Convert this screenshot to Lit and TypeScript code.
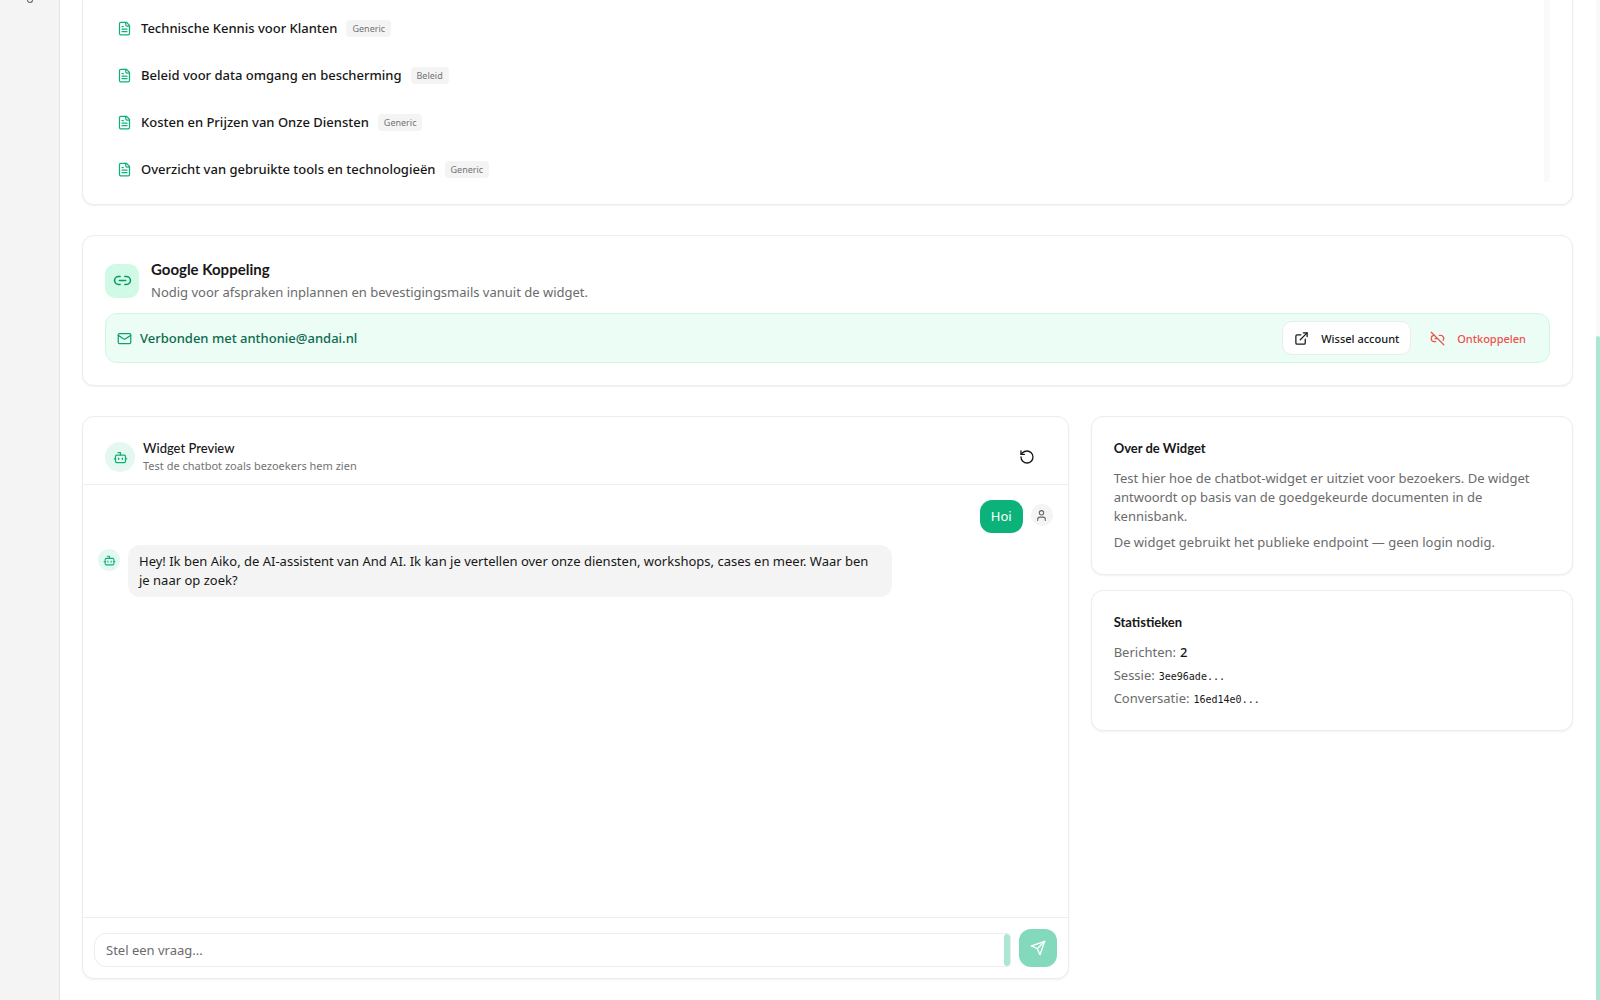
import { LitElement, html, css, svg } from "lit";
import { customElement, property, state } from "lit/decorators.js";

const icons: Record<string, unknown> = {
  file: svg`<path d="M15 2H6a2 2 0 0 0-2 2v16a2 2 0 0 0 2 2h12a2 2 0 0 0 2-2V7Z"/><path d="M14 2v4a2 2 0 0 0 2 2h4"/><path d="M10 9H8"/><path d="M16 13H8"/><path d="M16 17H8"/>`,
  link: svg`<path d="M9 17H7A5 5 0 0 1 7 7h2"/><path d="M15 7h2a5 5 0 1 1 0 10h-2"/><path d="M8 12h8"/>`,
  unlink: svg`<path d="M9 17H7A5 5 0 0 1 7 7"/><path d="M15 7h2a5 5 0 0 1 4 8"/><path d="M8 12h4"/><path d="m2 2 20 20"/>`,
  mail: svg`<rect x="2" y="4" width="20" height="16" rx="2"/><path d="m22 7-8.97 5.7a1.94 1.94 0 0 1-2.06 0L2 7"/>`,
  external: svg`<path d="M15 3h6v6"/><path d="M10 14 21 3"/><path d="M18 13v6a2 2 0 0 1-2 2H5a2 2 0 0 1-2-2V8a2 2 0 0 1 2-2h6"/>`,
  bot: svg`<path d="M12 8V4H8"/><rect x="4" y="8" width="16" height="12" rx="2"/><path d="M2 14h2"/><path d="M20 14h2"/><path d="M15 13v2"/><path d="M9 13v2"/>`,
  reset: svg`<path d="M3 12a9 9 0 1 0 9-9 9.75 9.75 0 0 0-6.74 2.74L3 8"/><path d="M3 3v5h5"/>`,
  user: svg`<circle cx="12" cy="7" r="4"/><path d="M19 21v-2a4 4 0 0 0-4-4H9a4 4 0 0 0-4 4v2"/>`,
  send: svg`<path d="m22 2-7 20-4-9-9-4Z"/><path d="M22 2 11 13"/>`,
};

@customElement("ui-icon")
class UiIcon extends LitElement {
  static styles = css`
    :host { display: inline-flex; flex: none; width: 15px; height: 15px; }
    .glyph { width: 100%; height: 100%; fill: none; stroke: currentColor; stroke-width: 2; stroke-linecap: round; stroke-linejoin: round; }
  `;
  @property() name = "";
  render() {
    return html`<svg class="glyph" viewBox="0 0 24 24" aria-hidden="true">${icons[this.name]}</svg>`;
  }
}

@customElement("app-root")
class AppRoot extends LitElement {
  static styles = css`
    :host { display: block; font-family: "Noto Sans", sans-serif; font-size: 13px; line-height: 19px; color: #171717; background: #fff; }
    * { box-sizing: border-box; }
    h2, h3, p, ul, dl, dd { margin: 0; padding: 0; }
    button, input { font: inherit; color: inherit; }
    .page { display: flex; min-height: 100vh; }
    .rail { flex: none; width: 60px; background: #f4f4f4; border-right: 1px solid #e5e5e5; }
    .rail-mark { display: block; width: 6px; height: 3px; margin-left: 27px; border: 1px solid #666; border-top: 0; border-radius: 0 0 3px 3px; }
    .main { flex: 1; min-width: 0; display: flex; flex-direction: column; gap: 30px; padding: 0 23px 20px 22px; }
    .scroll { flex: none; width: 4px; padding-top: 336px; background: #fafafa; display: flex; }
    .thumb { flex: 1; background: #ace6d5; border-radius: 2px 2px 0 0; }
    .card { background: #fff; border: 1px solid #ededed; border-radius: 12px; box-shadow: 0 1px 2px rgba(0, 0, 0, 0.06); }
    .heading { font-family: Lato, sans-serif; font-weight: 700; font-size: 15px; line-height: 20px; }

    .docs { display: flex; border-top: 0; border-radius: 0 0 12px 12px; padding: 0 22px 22px; }
    .doc-list { flex: 1; list-style: none; display: flex; flex-direction: column; gap: 21px; padding: 15px 12px 0; }
    .doc { display: flex; align-items: center; gap: 9px; height: 26px; font-weight: 500; }
    .doc ui-icon { color: #0eb07a; }
    .tag { font-size: 9px; line-height: 17px; font-weight: 400; color: #737373; background: #f4f4f4; border-radius: 4px; padding: 0 6px; }
    .track { width: 6px; background: #fafafa; }

    .google { padding: 23px 22px 22px; }
    .google-head { display: flex; align-items: center; gap: 12px; }
    .google-text { display: flex; flex-direction: column; gap: 4px; }
    .tile { display: flex; align-items: center; justify-content: center; width: 34px; height: 34px; border-radius: 10px; background: #d0fae5; color: #099868; }
    .tile ui-icon { width: 19px; height: 19px; }
    .muted { color: #6b6b6b; }
    .linked { display: flex; align-items: center; justify-content: space-between; margin-top: 11px; padding: 7px 11px; border: 1px solid #cdf7e3; border-radius: 12px; background: #ecfdf5; }
    .account { display: flex; align-items: center; gap: 8px; color: #0b6b4f; font-weight: 500; }
    .account ui-icon { color: #0ba470; }
    .actions { display: flex; gap: 7px; }
    .btn { display: flex; align-items: center; gap: 12px; height: 34px; padding: 0 11px; border: 1px solid transparent; border-radius: 10px; background: none; font-size: 11px; font-weight: 500; }
    .outline { background: #fff; border-color: #e8eeeb; }
    .danger { color: #f0504d; }

    .grid { display: grid; grid-template-columns: repeat(3, 1fr); gap: 22px; align-items: start; }
    .chat { grid-column: span 2; display: flex; flex-direction: column; min-height: 563px; }
    .chat-head { display: flex; align-items: center; gap: 8px; padding: 22px 22px 9px; border-bottom: 1px solid #ededed; }
    .chat-title { flex: 1; }
    .chat-name { font-family: Lato, sans-serif; font-weight: 500; font-size: 13px; line-height: 18px; }
    .chat-sub { font-size: 11px; line-height: 18px; color: #737373; }
    .round { flex: none; display: flex; align-items: center; justify-content: center; width: 30px; height: 30px; border-radius: 50%; background: #e3f8ef; color: #0eb07a; }
    .mini { width: 22px; height: 22px; margin-top: 4px; }
    .mini ui-icon { width: 13px; height: 13px; }
    .person { background: #f4f4f4; color: #666; }
    .reset { justify-content: center; width: 38px; padding: 0; }
    .reset ui-icon { width: 16px; height: 16px; }
    .messages { flex: 1; display: flex; flex-direction: column; gap: 12px; padding: 15px; }
    .message { display: flex; align-items: flex-start; gap: 8px; }
    .mine { justify-content: flex-end; }
    .bubble { max-width: 80%; padding: 7px 11px; border-radius: 12px; background: #f4f4f4; }
    .mine .bubble { background: #0bb37b; color: #fff; }
    .composer { display: flex; align-items: flex-end; gap: 8px; padding: 11px; border-top: 1px solid #ededed; }
    .field { flex: 1; display: flex; height: 34px; border: 1px solid #ededed; border-radius: 12px 4px 4px 12px; overflow: hidden; }
    .input { flex: 1; min-width: 0; border: 0; outline: 0; background: none; padding: 0 11px; }
    .input::placeholder { color: #6b6b6b; opacity: 1; }
    .field-thumb { width: 6px; background: #ace6d5; border-radius: 3px; }
    .send { flex: none; display: flex; align-items: center; justify-content: center; width: 38px; height: 38px; padding: 0; border: 0; border-radius: 12px; background: #82d9bb; color: #fff; }
    .send ui-icon { width: 16px; height: 16px; }

    .side { display: flex; flex-direction: column; gap: 15px; }
    .info { padding: 22px; display: flex; flex-direction: column; gap: 11px; }
    .info .heading { font-size: 13px; line-height: 19px; }
    .paras { display: flex; flex-direction: column; gap: 7px; }
    .stats { display: flex; flex-direction: column; gap: 4px; }
    .stat { display: flex; align-items: baseline; gap: 4px; height: 19px; }
    .stat dd { color: #171717; font-weight: 500; }
    .stat .code { font-family: "DejaVu Sans Mono", monospace; font-size: 10px; font-weight: 400; }
  `;

  @state() private docs = [
    ["Technische Kennis voor Klanten", "Generic"],
    ["Beleid voor data omgang en bescherming", "Beleid"],
    ["Kosten en Prijzen van Onze Diensten", "Generic"],
    ["Overzicht van gebruikte tools en technologieën", "Generic"],
  ];

  render() {
    return html`
      <div class="page">
        <aside class="rail"><span class="rail-mark"></span></aside>
        <main class="main">
          <section class="card docs">
            <ul class="doc-list">
              ${this.docs.map(([title, tag]) => html`<li class="doc"><ui-icon name="file"></ui-icon><span>${title}</span><span class="tag">${tag}</span></li>`)}
            </ul>
            <div class="track"></div>
          </section>
          <section class="card google">
            <div class="google-head">
              <span class="tile"><ui-icon name="link"></ui-icon></span>
              <div class="google-text">
                <h2 class="heading">Google Koppeling</h2>
                <p class="muted">Nodig voor afspraken inplannen en bevestigingsmails vanuit de widget.</p>
              </div>
            </div>
            <div class="linked">
              <span class="account"><ui-icon name="mail"></ui-icon>Verbonden met anthonie@andai.nl</span>
              <div class="actions">
                <button class="btn outline"><ui-icon name="external"></ui-icon>Wissel account</button>
                <button class="btn danger"><ui-icon name="unlink"></ui-icon>Ontkoppelen</button>
              </div>
            </div>
          </section>
          <div class="grid">
            <section class="card chat">
              <header class="chat-head">
                <span class="round"><ui-icon name="bot"></ui-icon></span>
                <div class="chat-title">
                  <h2 class="chat-name">Widget Preview</h2>
                  <p class="chat-sub">Test de chatbot zoals bezoekers hem zien</p>
                </div>
                <button class="btn reset" aria-label="Reset"><ui-icon name="reset"></ui-icon></button>
              </header>
              <div class="messages">
                <div class="message mine"><p class="bubble">Hoi</p><span class="round mini person"><ui-icon name="user"></ui-icon></span></div>
                <div class="message"><span class="round mini"><ui-icon name="bot"></ui-icon></span><p class="bubble">Hey! Ik ben Aiko, de AI-assistent van And AI. Ik kan je vertellen over onze diensten, workshops, cases en meer. Waar ben je naar op zoek?</p></div>
              </div>
              <form class="composer" @submit=${(e: Event) => e.preventDefault()}>
                <div class="field"><input class="input" placeholder="Stel een vraag..." aria-label="Stel een vraag" /><span class="field-thumb"></span></div>
                <button class="send" aria-label="Verstuur"><ui-icon name="send"></ui-icon></button>
              </form>
            </section>
            <div class="side">
              <section class="card info">
                <h3 class="heading">Over de Widget</h3>
                <div class="paras muted">
                  <p>Test hier hoe de chatbot-widget er uitziet voor bezoekers. De widget antwoordt op basis van de goedgekeurde documenten in de kennisbank.</p>
                  <p>De widget gebruikt het publieke endpoint — geen login nodig.</p>
                </div>
              </section>
              <section class="card info">
                <h3 class="heading">Statistieken</h3>
                <dl class="stats muted">
                  <div class="stat"><dt>Berichten:</dt><dd>2</dd></div>
                  <div class="stat"><dt>Sessie:</dt><dd class="code">3ee96ade...</dd></div>
                  <div class="stat"><dt>Conversatie:</dt><dd class="code">16ed14e0...</dd></div>
                </dl>
              </section>
            </div>
          </div>
        </main>
        <div class="scroll"><span class="thumb"></span></div>
      </div>
    `;
  }
}
